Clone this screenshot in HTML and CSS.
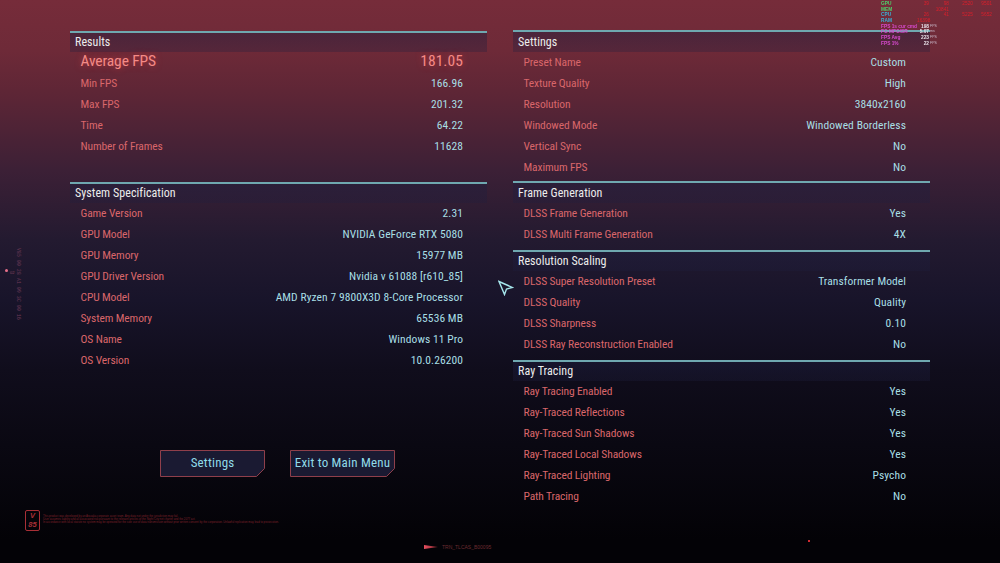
FILE: index.html
```html
<!DOCTYPE html>
<html lang="en">
<head>
<meta charset="utf-8">
<title>Benchmark Results</title>
<link rel="stylesheet" href="styles.css">
</head>
<body>
<div class="screen">
  <div class="columns">
    <div class="col">
      <section class="sec sec-results">
        <h2 class="head">Results</h2>
        <div class="row row-big"><span class="k">Average FPS</span><span class="v">181.05</span></div>
        <div class="row"><span class="k">Min FPS</span><span class="v">166.96</span></div>
        <div class="row"><span class="k">Max FPS</span><span class="v">201.32</span></div>
        <div class="row"><span class="k">Time</span><span class="v">64.22</span></div>
        <div class="row"><span class="k">Number of Frames</span><span class="v">11628</span></div>
      </section>
      <section class="sec sec-system">
        <h2 class="head">System Specification</h2>
        <div class="row"><span class="k">Game Version</span><span class="v">2.31</span></div>
        <div class="row"><span class="k">GPU Model</span><span class="v">NVIDIA GeForce RTX 5080</span></div>
        <div class="row"><span class="k">GPU Memory</span><span class="v">15977 MB</span></div>
        <div class="row"><span class="k">GPU Driver Version</span><span class="v">Nvidia v 61088 [r610_85]</span></div>
        <div class="row"><span class="k">CPU Model</span><span class="v">AMD Ryzen 7 9800X3D 8-Core Processor</span></div>
        <div class="row"><span class="k">System Memory</span><span class="v">65536 MB</span></div>
        <div class="row"><span class="k">OS Name</span><span class="v">Windows 11 Pro</span></div>
        <div class="row"><span class="k">OS Version</span><span class="v">10.0.26200</span></div>
      </section>
      <div class="actions">
        <button class="btn btn-a"><svg class="btn-bg" viewBox="0 0 105 27" aria-hidden="true"><path d="M.5.5H104.500V18.500L96.500 26.500H.5Z"/></svg><span>Settings</span></button>
        <button class="btn btn-b"><svg class="btn-bg" viewBox="0 0 105 27" aria-hidden="true"><path d="M.5.5H104.500V18.500L96.500 26.500H.5Z"/></svg><span>Exit to Main Menu</span></button>
      </div>
    </div>
    <div class="col col-right">
      <section class="sec sec-settings">
        <h2 class="head">Settings</h2>
        <div class="row"><span class="k">Preset Name</span><span class="v">Custom</span></div>
        <div class="row"><span class="k">Texture Quality</span><span class="v">High</span></div>
        <div class="row"><span class="k">Resolution</span><span class="v">3840x2160</span></div>
        <div class="row"><span class="k">Windowed Mode</span><span class="v">Windowed Borderless</span></div>
        <div class="row"><span class="k">Vertical Sync</span><span class="v">No</span></div>
        <div class="row"><span class="k">Maximum FPS</span><span class="v">No</span></div>
      </section>
      <section class="sec sec-frame">
        <h2 class="head">Frame Generation</h2>
        <div class="row"><span class="k">DLSS Frame Generation</span><span class="v">Yes</span></div>
        <div class="row"><span class="k">DLSS Multi Frame Generation</span><span class="v">4X</span></div>
      </section>
      <section class="sec sec-scaling">
        <h2 class="head">Resolution Scaling</h2>
        <div class="row"><span class="k">DLSS Super Resolution Preset</span><span class="v">Transformer Model</span></div>
        <div class="row"><span class="k">DLSS Quality</span><span class="v">Quality</span></div>
        <div class="row"><span class="k">DLSS Sharpness</span><span class="v">0.10</span></div>
        <div class="row"><span class="k">DLSS Ray Reconstruction Enabled</span><span class="v">No</span></div>
      </section>
      <section class="sec sec-rt">
        <h2 class="head">Ray Tracing</h2>
        <div class="row"><span class="k">Ray Tracing Enabled</span><span class="v">Yes</span></div>
        <div class="row"><span class="k">Ray-Traced Reflections</span><span class="v">Yes</span></div>
        <div class="row"><span class="k">Ray-Traced Sun Shadows</span><span class="v">Yes</span></div>
        <div class="row"><span class="k">Ray-Traced Local Shadows</span><span class="v">Yes</span></div>
        <div class="row"><span class="k">Ray-Traced Lighting</span><span class="v">Psycho</span></div>
        <div class="row"><span class="k">Path Tracing</span><span class="v">No</span></div>
      </section>
    </div>
  </div>

  <svg class="cursor" viewBox="0 0 16 16" aria-hidden="true"><path d="M1 1.500L14.500 7.500L8.500 9L6.500 14.500Z"/></svg>

  <div class="osd">
    <div class="osd-row"><b class="g">GPU</b><i>39</i><i>98</i><i>2520</i><i>9501</i></div>
    <div class="osd-row"><b class="g">MEM</b><i></i><i>10841</i></div>
    <div class="osd-row"><b class="t">CPU</b><i>26</i><i>41</i><i>5225</i><i>5652</i></div>
    <div class="osd-row"><b class="t">RAM</b><i>16398</i></div>
    <div class="osd-row"><b class="p">FPS 1s cur cmd</b><u>198</u><em>FPS</em></div>
    <div class="osd-row"><b class="p">FG MFG/SR</b><u>5.07</u><em>ms</em></div>
    <div class="osd-row"><b class="p">FPS Avg</b><u>223</u><em>FPS</em></div>
    <div class="osd-row"><b class="p">FPS 1%</b><u>22</u><em>FPS</em></div>
  </div>

  <div class="side-dot"></div>
  <div class="side-mini">02</div>
  <div class="side-text">V85 00 28 A1 09 3C 00 16</div>

  <div class="badge"><span>V</span><span>85</span></div>
  <div class="legal">
    <p>This product was developed by an Arasaka corporate asset team. Any data not under the jurisdiction may fail.</p>
    <p>User assumes liability and all associated risk pursuant to the relevant articles of the Night City net charter and the 2077 act.</p>
    <p>In accordance with local statute no system may be operated for the sole use of data transmission without prior written consent by the corporation. Unlawful replication may lead to prosecution.</p>
  </div>
  <div class="tag"><span class="tag-arrow"></span><span>TRN_TLCAS_B00095</span></div>
  <div class="red-dot"></div>
</div>
</body>
</html>
```
FILE: styles.css
```css
* { box-sizing: border-box; }
html, body { margin: 0; padding: 0; background: #040308; }
.screen {
  position: relative;
  width: 1000px;
  height: 563px;
  overflow: hidden;
  font-family: Roboto, "Liberation Sans", sans-serif;
  font-stretch: 75%;
  font-size: 11.500px;
  background: linear-gradient(180deg, #762c3a 0, #6e2a38 50px, #5f2636 90px, #3c2036 170px, #231a30 240px, #18142a 300px, #100d1c 370px, #0a0812 445px, #030206 540px);
}
.columns { display: flex; gap: 26px; padding: 31px 0 0 70px; }
.col { width: 417px; display: flex; flex-direction: column; }
.col-right { margin-top: -1px; }
.sec { display: flex; flex-direction: column; }
.head {
  margin: 0;
  height: 21px;
  padding: 0 0 0 5px;
  border-top: 2px solid #6fa8b0;
  background: linear-gradient(180deg, rgba(30, 30, 62, .45), rgba(30, 30, 62, .3));
  color: #ececec;
  font-size: 12px;
  font-weight: 400;
  line-height: 19px;
  letter-spacing: .05px;
}
.sec-settings .head, .sec-frame .head { height: 22px; line-height: 20px; }
.sec-results .head, .sec-rt .head { line-height: 18px; }
.row {
  display: flex;
  justify-content: space-between;
  height: 21px;
  line-height: 20px;
  padding: 0 24px 0 10.500px;
}
.k { color: #d9666a; letter-spacing: -.12px; }
.v { color: #a8dfe5; letter-spacing: .08px; }
.row-big { font-size: 15.500px; line-height: 19px; }
.row-big .k, .row-big .v { color: #f48a86; text-shadow: 0 0 6px rgba(240, 70, 70, .55); }
.sec-results { margin-bottom: 25px; }
.sec-system { margin-bottom: 79px; }
.sec-settings { margin-bottom: 3px; }
.sec-frame { margin-bottom: 5px; }
.sec-scaling { margin-bottom: 5px; }
.actions { display: flex; gap: 25px; padding-left: 90px; }
.btn {
  position: relative;
  width: 105px;
  height: 27px;
  padding: 0 0 2px;
  border: 0;
  background: none;
  color: #90dbe9;
  font: inherit;
  font-size: 13px;
  letter-spacing: .2px;
  white-space: nowrap;
}
.btn span { position: relative; }
.btn-bg { position: absolute; inset: 0; width: 105px; height: 27px; }
.btn-bg path { fill: #1a1a32; stroke: #8f3f4b; stroke-width: 1; }
.cursor { position: absolute; left: 498px; top: 280px; width: 16px; height: 16px; }
.cursor path { fill: none; stroke: #a6e6ec; stroke-width: 1.400; }
.osd {
  position: absolute;
  left: 881px;
  top: 1px;
  font-family: "Liberation Sans", sans-serif;
  font-size: 4.800px;
  line-height: 5.700px;
  filter: blur(.25px);
}
.osd-row { display: grid; grid-template-columns: 36px 12px 20px 24px 19px; height: 5.700px; white-space: nowrap; }
.osd b { font-weight: 700; }
.osd .g { color: #4fd06a; }
.osd .t { color: #3ab0d8; }
.osd .p { color: #d94ad0; }
.osd i { font-style: normal; color: #d8202c; text-align: right; }
.osd u { text-decoration: none; color: #e8e0e8; text-align: right; font-weight: 700; }
.osd em { font-style: normal; color: #c8b8c8; font-size: 3.500px; padding-left: 1px; }
.side-dot { position: absolute; left: 5px; top: 269px; width: 3px; height: 3px; border-radius: 50%; background: #e8708a; }
.side-mini { position: absolute; left: 10px; top: 270px; color: #8a4560; font: 4px "Liberation Sans", sans-serif; }
.side-text {
  position: absolute;
  left: 16px;
  top: 248px;
  writing-mode: vertical-rl;
  white-space: nowrap;
  color: #6e3a58;
  font: 4.500px/5px "Liberation Mono", monospace;
  letter-spacing: .3px;
}
.badge {
  position: absolute;
  left: 25px;
  top: 510px;
  width: 15px;
  height: 21px;
  border: 1px solid #a82f36;
  border-radius: 2px;
  color: #a82f36;
  font: italic 700 7.500px/8.500px "Liberation Sans", sans-serif;
  display: flex;
  flex-direction: column;
  align-items: center;
  justify-content: center;
}
.legal {
  position: absolute;
  left: 43px;
  top: 515px;
  color: #7d2229;
  font: 2.800px/3px "Liberation Sans", sans-serif;
  white-space: nowrap;
}
.legal p { margin: 0; }
.tag {
  position: absolute;
  left: 424px;
  top: 544px;
  display: flex;
  align-items: center;
  gap: 4px;
  color: #6b2a30;
  font: 5px/6px "Liberation Sans", sans-serif;
}
.tag-arrow {
  width: 14px;
  height: 4px;
  background: linear-gradient(90deg, #e85060, #7d2229);
  clip-path: polygon(0 0, 100% 50%, 0 100%);
}
.red-dot { position: absolute; left: 808px; top: 540px; width: 2px; height: 2px; background: #d02a30; }
```
